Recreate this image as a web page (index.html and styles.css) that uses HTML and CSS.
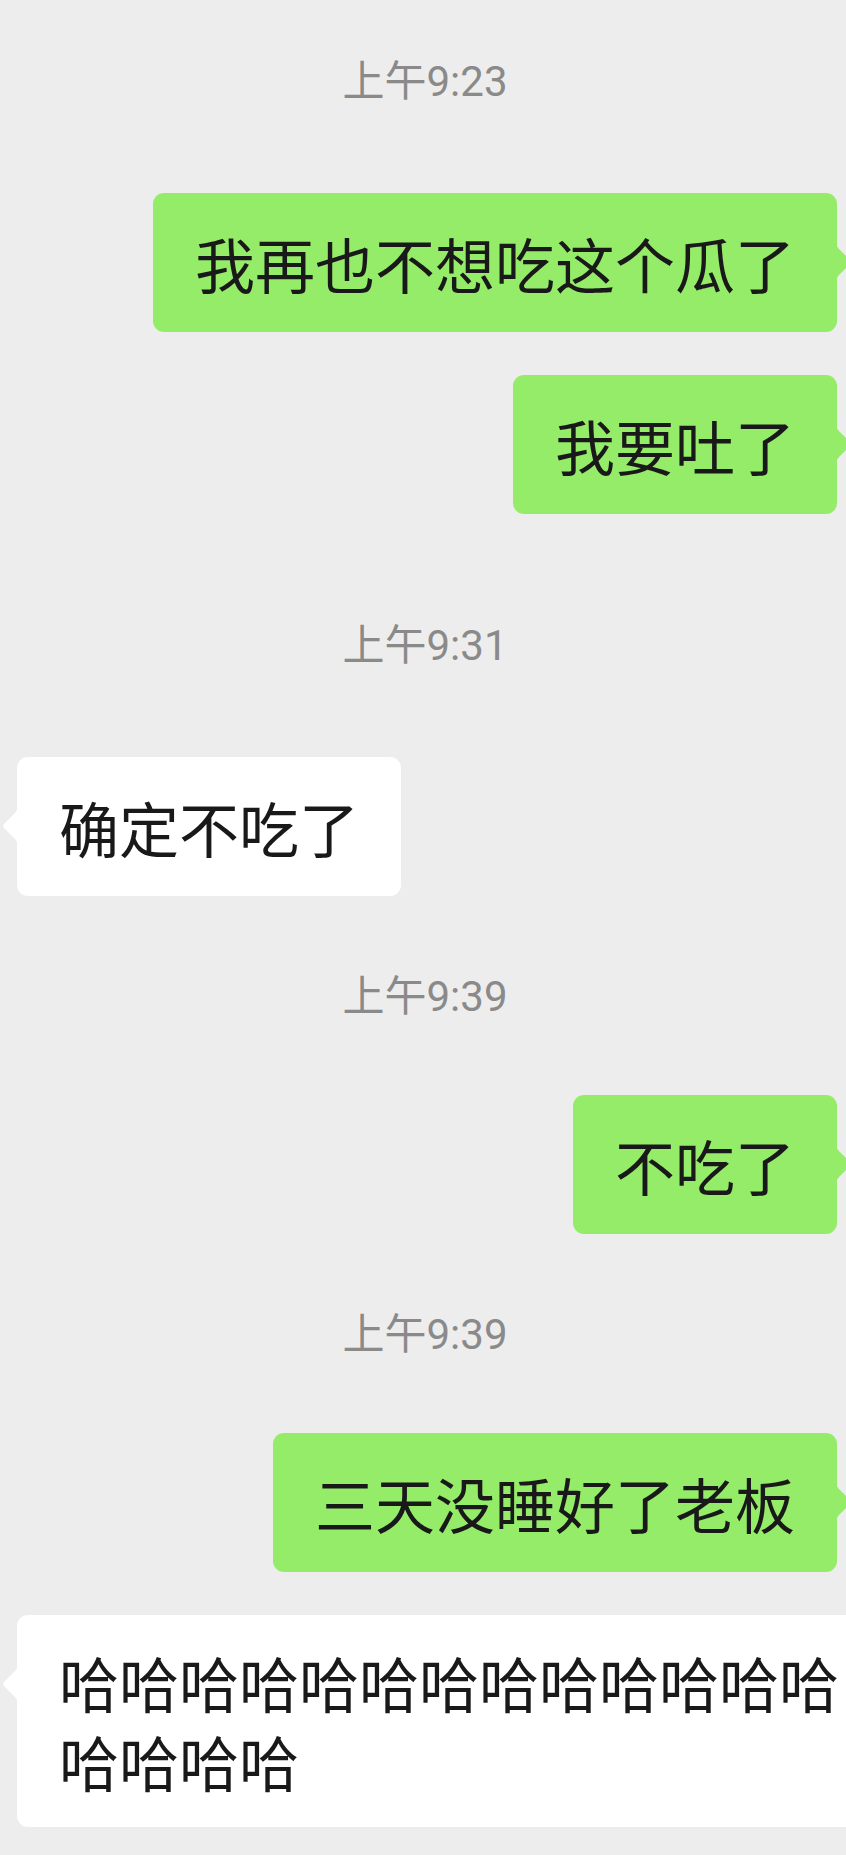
FILE: index.html
```html
<!DOCTYPE html>
<html lang="zh-CN">
<head>
<meta charset="utf-8">
<title>聊天</title>
<link rel="stylesheet" href="styles.css">
</head>
<body>
<div class="chat">
  <div class="time time-first">上午9:23</div>
  <div class="row row-me">
    <div class="bubble bubble-me">我再也不想吃这个瓜了<svg class="tail tail-right" viewBox="0 0 18 40" width="18" height="40"><path d="M0 0 Q0 4 3 7 L14 18 Q16 20 14 22 L3 33 Q0 36 0 40 Z"/></svg></div>
  </div>
  <div class="row row-me">
    <div class="bubble bubble-me">我要吐了<svg class="tail tail-right" viewBox="0 0 18 40" width="18" height="40"><path d="M0 0 Q0 4 3 7 L14 18 Q16 20 14 22 L3 33 Q0 36 0 40 Z"/></svg></div>
  </div>
  <div class="time time-loose">上午9:31</div>
  <div class="row row-other">
    <div class="bubble bubble-other">确定不吃了<svg class="tail tail-left" viewBox="0 0 18 40" width="18" height="40"><path d="M18 0 Q18 4 15 7 L4 18 Q2 20 4 22 L15 33 Q18 36 18 40 Z"/></svg></div>
  </div>
  <div class="time">上午9:39</div>
  <div class="row row-me">
    <div class="bubble bubble-me">不吃了<svg class="tail tail-right" viewBox="0 0 18 40" width="18" height="40"><path d="M0 0 Q0 4 3 7 L14 18 Q16 20 14 22 L3 33 Q0 36 0 40 Z"/></svg></div>
  </div>
  <div class="time">上午9:39</div>
  <div class="row row-me">
    <div class="bubble bubble-me">三天没睡好了老板<svg class="tail tail-right" viewBox="0 0 18 40" width="18" height="40"><path d="M0 0 Q0 4 3 7 L14 18 Q16 20 14 22 L3 33 Q0 36 0 40 Z"/></svg></div>
  </div>
  <div class="row row-other">
    <div class="bubble bubble-other">哈哈哈哈哈哈哈哈哈哈哈哈哈哈哈哈哈<svg class="tail tail-left" viewBox="0 0 18 40" width="18" height="40"><path d="M18 0 Q18 4 15 7 L4 18 Q2 20 4 22 L15 33 Q18 36 18 40 Z"/></svg></div>
  </div>
</div>
</body>
</html>
```
FILE: styles.css
```css
html, body {
  margin: 0;
  padding: 0;
}

body {
  background: #ededed;
  width: 846px;
  height: 1855px;
  overflow: hidden;
  font-family: "Noto Sans CJK SC", "Noto Sans", sans-serif;
}

.chat {
  display: flex;
  flex-direction: column;
  padding-top: 54px;
}

.time {
  height: 50px;
  line-height: 56px;
  font-family: Roboto, "Noto Sans CJK SC", sans-serif;
  font-size: 42px;
  color: #8a8a8a;
  text-align: center;
  margin: 73px 0 76px;
  padding-left: 4px;
}

.time-first {
  margin: 0 0 89px;
}

.time-loose {
  margin: 104px 0 89px;
}

.row {
  display: flex;
}

.row + .row {
  margin-top: 43px;
}

.row-me {
  justify-content: flex-end;
  padding-right: 9px;
}

.row-other {
  justify-content: flex-start;
  padding-left: 17px;
}

.bubble {
  position: relative;
  flex-shrink: 0;
  box-sizing: border-box;
  min-height: 139px;
  max-width: 880px;
  padding: 27px 42px;
  display: flex;
  align-items: center;
  border-radius: 11px;
  font-size: 60px;
  line-height: 79px;
  color: #191919;
  word-break: break-all;
}

.bubble-me {
  background: #95ec69;
}

.bubble-other {
  background: #ffffff;
}

.tail {
  position: absolute;
  top: 49px;
  display: block;
}

.tail-right {
  left: calc(100% - 1px);
  fill: #95ec69;
}

.tail-left {
  right: calc(100% - 1px);
  fill: #ffffff;
}
```
